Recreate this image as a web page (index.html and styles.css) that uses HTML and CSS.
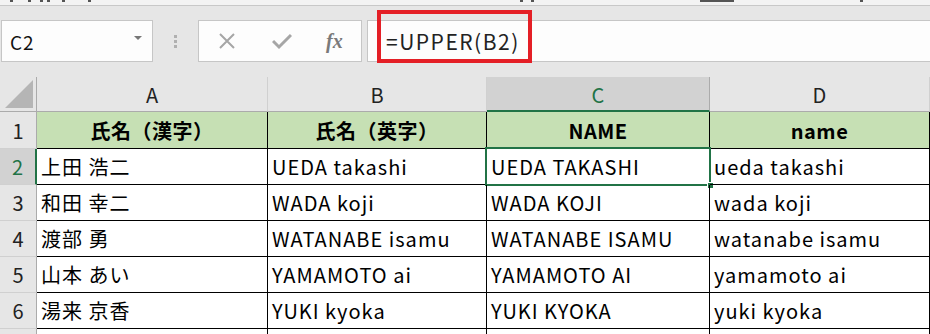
FILE: index.html
```html
<!DOCTYPE html>
<html lang="ja">

<head>
    <meta charset="UTF-8">
    <meta name="viewport" content="width=device-width, initial-scale=1.0">
    <title>UPPER関数</title>
    <link rel="stylesheet" href="styles.css">
</head>

<body>
    <!-- リボンの下端（グループ名の下端だけが見える） -->
    <div class="ribbon-edge">
        <span class="tick" style="left: 10px"></span>
        <span class="tick" style="left: 28px"></span>
        <span class="tick" style="left: 40px"></span>
        <span class="tick" style="left: 47px"></span>
        <span class="tick" style="left: 62px"></span>
        <span class="tick" style="left: 88px"></span>
        <span class="tick" style="left: 520px"></span>
        <span class="tick" style="left: 531px"></span>
        <span class="tick wide" style="left: 700px"></span>
        <span class="tick" style="left: 860px"></span>
    </div>

    <!-- 名前ボックスと数式バー -->
    <div class="formula-row">
        <div class="name-box">
            <span class="name-text">C2</span>
            <span class="name-arrow"></span>
        </div>
        <div class="grip">
            <i></i><i></i><i></i>
        </div>
        <div class="fx-buttons">
            <svg class="fx-icon" width="18" height="18" viewBox="0 0 18 18">
                <path d="M2 2 L16 16 M16 2 L2 16" stroke="#a6a6a6" stroke-width="2" fill="none"/>
            </svg>
            <svg class="fx-icon" width="20" height="18" viewBox="0 0 20 18">
                <path d="M1 9 L7 15 L19 3" stroke="#a6a6a6" stroke-width="3" fill="none"/>
            </svg>
            <span class="fx-text">fx</span>
        </div>
        <div class="formula-bar">
            <span class="formula-text">=UPPER(B2)</span>
            <div class="mark"></div>
        </div>
    </div>

    <!-- シート -->
    <div class="sheet">
        <div class="corner"><span class="tri"></span></div>
        <div class="col-head">A</div>
        <div class="col-head">B</div>
        <div class="col-head col-active">C</div>
        <div class="col-head">D</div>

        <div class="row-head row-1">1</div>
        <div class="cell title row-1">氏名（漢字）</div>
        <div class="cell title row-1">氏名（英字）</div>
        <div class="cell title row-1">NAME</div>
        <div class="cell title row-1">name</div>

        <div class="row-head row-active">2</div>
        <div class="cell">上田 浩二</div>
        <div class="cell">UEDA takashi</div>
        <div class="cell selected">UEDA TAKASHI<span class="sel-box"></span><span class="handle"></span></div>
        <div class="cell">ueda takashi</div>

        <div class="row-head">3</div>
        <div class="cell">和田 幸二</div>
        <div class="cell">WADA koji</div>
        <div class="cell">WADA KOJI</div>
        <div class="cell">wada koji</div>

        <div class="row-head">4</div>
        <div class="cell">渡部 勇</div>
        <div class="cell">WATANABE isamu</div>
        <div class="cell">WATANABE ISAMU</div>
        <div class="cell">watanabe isamu</div>

        <div class="row-head">5</div>
        <div class="cell">山本 あい</div>
        <div class="cell">YAMAMOTO ai</div>
        <div class="cell">YAMAMOTO AI</div>
        <div class="cell">yamamoto ai</div>

        <div class="row-head">6</div>
        <div class="cell">湯来 京香</div>
        <div class="cell">YUKI kyoka</div>
        <div class="cell">YUKI KYOKA</div>
        <div class="cell">yuki kyoka</div>

        <div class="row-head row-7"></div>
        <div class="cell row-7"></div>
        <div class="cell row-7"></div>
        <div class="cell row-7"></div>
        <div class="cell row-7"></div>
    </div>
</body>

</html>
```

FILE: styles.css
```css
* {
    box-sizing: border-box;
    margin: 0;
    padding: 0;
}

body {
    width: 930px;
    height: 334px;
    overflow: hidden;
    background-color: #e6e6e6;
    font-family: "Noto Sans CJK JP", "Noto Sans", sans-serif;
    color: #000;
}

/* リボン */
.ribbon-edge {
    height: 6px;
    background-color: #f3f3f3;
    border-bottom: 1px solid #c8c8c8;
    position: relative;
}

.tick {
    position: absolute;
    top: 0;
    width: 3px;
    height: 2px;
    background-color: #555;
}

.tick.wide {
    width: 34px;
}

/* 数式バー */
.formula-row {
    height: 71px;
    display: flex;
    align-items: flex-start;
    padding-top: 14px;
}

.name-box {
    width: 152px;
    height: 42px;
    margin-left: 1px;
    background-color: #fdfdfd;
    border: 1px solid #c6c6c6;
    display: flex;
    align-items: center;
    justify-content: space-between;
    padding: 0 10px 0 8px;
}

.name-text {
    font-size: 19px;
    color: #111;
    letter-spacing: 1px;
}

.name-arrow {
    width: 0;
    height: 0;
    border-left: 4px solid transparent;
    border-right: 4px solid transparent;
    border-top: 4px solid #777;
    margin-bottom: 6px;
}

.grip {
    width: 45px;
    height: 42px;
    display: flex;
    flex-direction: column;
    align-items: center;
    justify-content: center;
    gap: 2px;
}

.grip i {
    width: 3px;
    height: 3px;
    background-color: #b0b0b0;
}

.fx-buttons {
    width: 164px;
    height: 42px;
    background-color: #fdfdfd;
    border: 1px solid #c6c6c6;
    display: flex;
    align-items: center;
    padding-left: 19px;
}

.fx-icon {
    margin-right: 36px;
}

.fx-text {
    font-family: "Liberation Serif", serif;
    font-style: italic;
    font-weight: bold;
    font-size: 20px;
    color: #7a7a7a;
    margin-left: -2px;
}

.formula-bar {
    flex: 1;
    height: 42px;
    margin-left: 5px;
    background-color: #fdfdfd;
    border: 1px solid #c6c6c6;
    border-right: none;
    position: relative;
    display: flex;
    align-items: center;
    padding-left: 18px;
}

.formula-text {
    font-size: 21px;
    color: #222;
    letter-spacing: 1.5px;
}

/* 赤枠 */
.mark {
    position: absolute;
    left: 9px;
    top: -11px;
    width: 155px;
    height: 53px;
    border: 4px solid #e41f26;
}

/* シート */
.sheet {
    display: grid;
    grid-template-columns: 37px 231px 219px 223px 1fr;
    grid-template-rows: 35px 37px repeat(5, 36px) 6px;
    background-color: #fff;
}

.corner {
    background-color: #e6e6e6;
    border-right: 1px solid #ababab;
    border-bottom: 1px solid #ababab;
    position: relative;
}

.tri {
    position: absolute;
    right: 3px;
    bottom: 3px;
    width: 0;
    height: 0;
    border-left: 28px solid transparent;
    border-bottom: 28px solid #b5b5b5;
}

.col-head {
    background-color: #e6e6e6;
    border-right: 1px solid #d0d0d0;
    border-bottom: 1px solid #ababab;
    display: flex;
    align-items: center;
    justify-content: center;
    font-size: 20px;
    color: #222;
    padding-top: 1px;
}

.col-active {
    background-color: #d2d2d2;
    border-bottom: 2px solid #217346;
    color: #217346;
    border-right-color: #ababab;
}

.row-head {
    background-color: #e6e6e6;
    border-right: 1px solid #ababab;
    border-bottom: 1px solid #d0d0d0;
    display: flex;
    align-items: center;
    justify-content: center;
    font-size: 20px;
    color: #222;
}

.row-active {
    background-color: #d2d2d2;
    border-right: 2px solid #217346;
    color: #217346;
}

.cell {
    border-right: 1px solid #000;
    border-bottom: 1px solid #000;
    display: flex;
    align-items: center;
    padding-left: 4px;
    font-size: 20px;
    letter-spacing: 1px;
    white-space: nowrap;
    position: relative;
}

.row-7 {
    border-bottom: none;
}

.title {
    background-color: #c6e0b4;
    justify-content: center;
    font-weight: bold;
    padding-left: 0;
    letter-spacing: 0.5px;
}

.selected .sel-box {
    position: absolute;
    left: -2px;
    top: -2px;
    right: -2px;
    bottom: -2px;
    border: 2px solid #217346;
}

.handle {
    position: absolute;
    right: -5px;
    bottom: -5px;
    width: 7px;
    height: 7px;
    background-color: #217346;
    border: 1px solid #fff;
}
```
